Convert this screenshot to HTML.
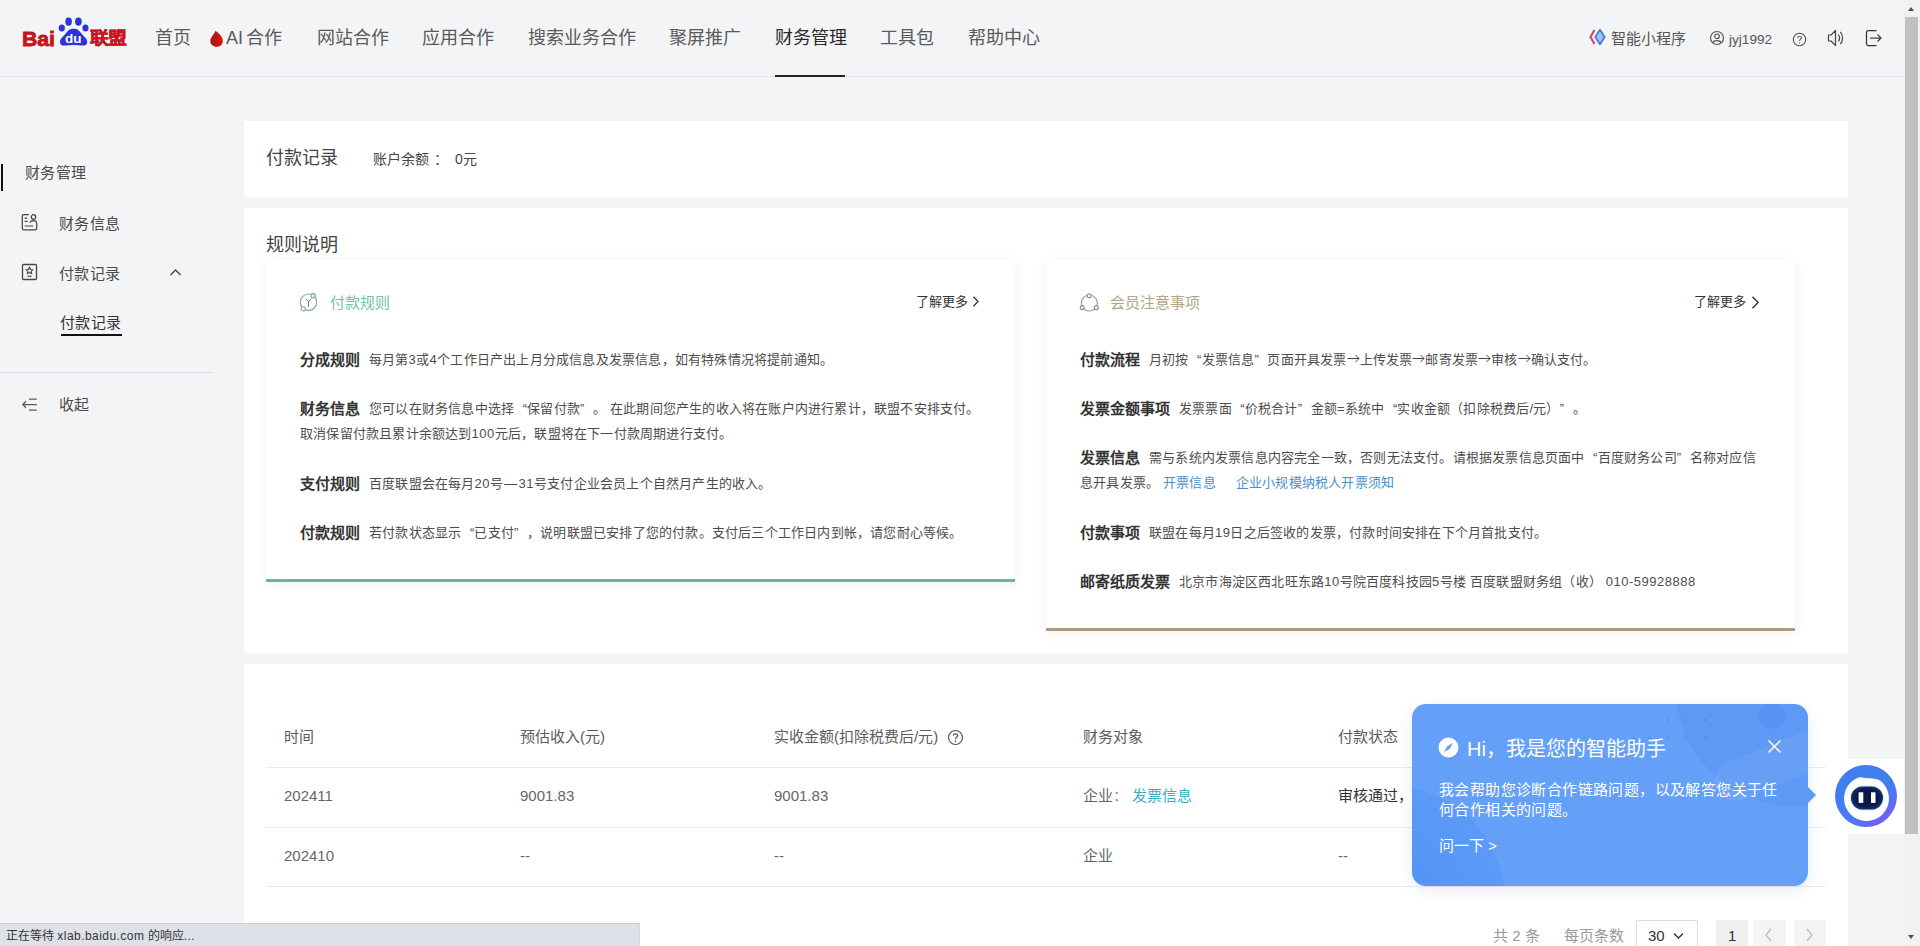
<!DOCTYPE html>
<html lang="zh-CN"><head><meta charset="utf-8">
<style>
*{margin:0;padding:0;box-sizing:border-box}
html,body{width:1920px;height:946px;overflow:hidden;background:#f3f4f6;font-family:"Liberation Sans",sans-serif;color:#333;font-weight:350}
.a{position:absolute;white-space:nowrap}
.nav{position:absolute;top:25px;font-size:18px;color:#5a5a5a;white-space:nowrap;line-height:26px}
.card{position:absolute;background:#fff}
.side{position:absolute;font-size:15px;color:#4a4a4a;line-height:20px;white-space:nowrap;letter-spacing:0.3px}
.ic{position:absolute}
.rl{position:absolute;white-space:nowrap;font-size:13px;color:#4d4d4d;line-height:18px;letter-spacing:0.2px}
.rl b{font-size:15px;color:#333;font-weight:bold;margin-right:9px;letter-spacing:0;position:relative;top:1px}
.th{position:absolute;font-size:15px;color:#5c5c5c;line-height:20px;white-space:nowrap}
.td{position:absolute;font-size:15px;color:#666;line-height:20px;white-space:nowrap}
.q{display:inline-block;width:1em;font-style:normal}.ql{text-align:right}.qr{text-align:left}.ar{display:inline-block;width:1em;font-style:normal;vertical-align:1px}
.dg{letter-spacing:0.5px}
.hr{position:absolute;height:1px;background:#ebebeb}
</style></head><body>

<!-- header -->
<div class="a" style="left:0;top:76px;width:1904px;height:1px;background:#e5e6e9"></div>
<svg class="ic" style="left:20px;top:14px" width="110" height="36" viewBox="0 0 110 36">
  <text x="2" y="31.5" font-family="Liberation Sans" font-weight="bold" font-size="21" fill="#c8141e" stroke="#c8141e" stroke-width="0.9" textLength="33" lengthAdjust="spacingAndGlyphs">Bai</text>
  <ellipse cx="48.6" cy="7.6" rx="3.3" ry="4.2" fill="#2d32dc"/>
  <ellipse cx="58.4" cy="7.6" rx="3.3" ry="4.2" fill="#2d32dc"/>
  <ellipse cx="41.8" cy="14" rx="3.1" ry="3.5" fill="#2d32dc"/>
  <ellipse cx="65.5" cy="14" rx="3.1" ry="3.5" fill="#2d32dc"/>
  <path d="M53.6 14.8 C49.5 14.8 48 16.8 46 19.3 C44 21.8 40 24.3 40 28 C40 31.2 42.5 31.8 45.5 31.5 C48.5 31.2 51 31 53.6 31 C56.2 31 58.7 31.2 61.7 31.5 C64.7 31.8 67.2 31.2 67.2 28 C67.2 24.3 63.2 21.8 61.2 19.3 C59.2 16.8 57.7 14.8 53.6 14.8 Z" fill="#2d32dc"/>
  <text x="45" y="29.2" font-family="Liberation Sans" font-weight="bold" font-size="12" fill="#fff" textLength="16.5" lengthAdjust="spacingAndGlyphs">du</text>
  <text x="70" y="30" font-weight="bold" font-size="17.5" fill="#c8141e" stroke="#c8141e" stroke-width="0.5" textLength="36.5" lengthAdjust="spacingAndGlyphs">联盟</text>
</svg>
<div class="nav" style="left:155px">首页</div>
<svg class="ic" style="left:209px;top:30px" width="16" height="18" viewBox="0 0 16 18">
  <defs><linearGradient id="fg" x1="0" y1="0" x2="1" y2="0"><stop offset="0" stop-color="#9c1a1a"/><stop offset="1" stop-color="#e01010"/></linearGradient></defs>
  <path d="M6.5 0.8 C8.5 2.5 13.5 6 13.8 10.5 C14 14 11.5 16.8 7.8 16.8 C4 16.8 1.3 14.2 1.3 11 C1.3 7.5 4.5 5.5 6.5 0.8 Z" fill="url(#fg)"/>
</svg>
<div class="nav" style="left:226px">AI<span style="margin-left:3px">合作</span></div>
<div class="nav" style="left:317px">网站合作</div>
<div class="nav" style="left:422px">应用合作</div>
<div class="nav" style="left:528px">搜索业务合作</div>
<div class="nav" style="left:669px">聚屏推广</div>
<div class="nav" style="left:775px;color:#2a2a2a">财务管理</div>
<div class="a" style="left:775px;top:75px;width:70px;height:2px;background:#222"></div>
<div class="nav" style="left:880px">工具包</div>
<div class="nav" style="left:968px">帮助中心</div>

<svg class="ic" style="left:1589px;top:29px" width="18" height="16" viewBox="0 0 18 16">
  <path d="M5.5 1 L1.5 8 L5.5 15" fill="none" stroke="#d2486a" stroke-width="2.2"/>
  <path d="M11 1 L15.5 8 L11 15 L6.5 8 Z" fill="none" stroke="#4a7ee8" stroke-width="2.2"/>
  <path d="M11 3.5 L14 8 L11 12.5 L8 8 Z" fill="#9cc1f5"/>
</svg>
<div class="a" style="left:1611px;top:29px;font-size:15px;color:#555;line-height:20px">智能小程序</div>
<svg class="ic" style="left:1709px;top:30px" width="16" height="16" viewBox="0 0 16 16">
  <circle cx="8" cy="8" r="6.5" fill="none" stroke="#555" stroke-width="1.2"/>
  <circle cx="8" cy="6.3" r="2.3" fill="none" stroke="#555" stroke-width="1.2"/>
  <path d="M3.8 12.6 C5 10 11 10 12.2 12.6" fill="none" stroke="#555" stroke-width="1.2"/>
</svg>
<div class="a" style="left:1729px;top:30px;font-size:13.6px;color:#555;line-height:20px">jyj1992</div>
<svg class="ic" style="left:1792px;top:32px" width="15" height="15" viewBox="0 0 15 15">
  <circle cx="7.5" cy="7.5" r="6.2" fill="none" stroke="#555" stroke-width="1.1"/>
  <path d="M5.5 5.8 C5.5 4 9.5 4 9.5 5.8 C9.5 7.2 7.5 7.2 7.5 9" fill="none" stroke="#555" stroke-width="1.1"/>
  <circle cx="7.5" cy="10.9" r="0.7" fill="#555"/>
</svg>
<svg class="ic" style="left:1827px;top:29px" width="18" height="18" viewBox="0 0 18 18">
  <path d="M1.5 6 L4 6 L8.5 1.5 L8.5 16.5 L4 12 L1.5 12 Z" fill="none" stroke="#444" stroke-width="1.2" stroke-linejoin="round"/>
  <path d="M11.3 5.5 C12.8 7.5 12.8 10.5 11.3 12.5" fill="none" stroke="#444" stroke-width="1.2"/>
  <path d="M13.3 2.8 C16.3 6 16.3 12 13.3 15.2" fill="none" stroke="#444" stroke-width="1.2"/>
</svg>
<svg class="ic" style="left:1864px;top:29px" width="20" height="18" viewBox="0 0 20 18">
  <path d="M12.5 1.5 L4 1.5 C3 1.5 2.5 2 2.5 3 L2.5 15 C2.5 16 3 16.5 4 16.5 L12.5 16.5" fill="none" stroke="#333" stroke-width="1.25"/>
  <path d="M6 9 L16.5 9 M13.5 5.5 L17 9 L13.5 12.5" fill="none" stroke="#444" stroke-width="1.25"/>
</svg>

<!-- sidebar -->
<div class="a" style="left:1px;top:164px;width:2px;height:27px;background:#111"></div>
<div class="side" style="left:25px;top:163px">财务管理</div>
<svg class="ic" style="left:21px;top:213px" width="18" height="18" viewBox="0 0 18 18">
  <path d="M7.8 1.5 L2.8 1.5 C1.9 1.5 1.3 2.1 1.3 3 L1.3 15.3 C1.3 16.2 1.9 16.8 2.8 16.8 L14.2 16.8 C15.1 16.8 15.7 16.2 15.7 15.3 L15.7 9.8" fill="none" stroke="#444" stroke-width="1.25"/>
  <circle cx="12.5" cy="3.9" r="2.2" fill="none" stroke="#444" stroke-width="1.2"/>
  <path d="M9 9.8 C9.3 6.8 15.4 6.8 15.7 9.8" fill="none" stroke="#444" stroke-width="1.2"/>
  <path d="M3.6 5.2 L6.2 5.2 M3.6 8.3 L6.6 8.3 M3.6 13 L12.2 13" stroke="#444" stroke-width="1.2"/>
</svg>
<div class="side" style="left:59px;top:214px">财务信息</div>
<svg class="ic" style="left:21px;top:263px" width="17" height="18" viewBox="0 0 17 18">
  <rect x="1.5" y="1.5" width="14" height="15" rx="1" fill="none" stroke="#444" stroke-width="1.3"/>
  <path d="M8.5 4 L9.5 6.5 L12 6.7 L10.1 8.3 L10.8 10.8 L8.5 9.4 L6.2 10.8 L6.9 8.3 L5 6.7 L7.5 6.5 Z" fill="none" stroke="#444" stroke-width="1.1" stroke-linejoin="round"/>
  <path d="M6.5 13.3 L10.5 13.3" stroke="#444" stroke-width="1.2"/>
</svg>
<div class="side" style="left:59px;top:264px">付款记录</div>
<svg class="ic" style="left:169px;top:267px" width="13" height="10" viewBox="0 0 13 10">
  <path d="M1.5 8 L6.5 3 L11.5 8" fill="none" stroke="#444" stroke-width="1.3"/>
</svg>
<div class="side" style="left:60px;top:313px;color:#333">付款记录</div>
<div class="a" style="left:61px;top:334px;width:61px;height:2px;background:#111"></div>
<div class="a" style="left:0;top:372px;width:212px;height:1px;background:#dcdde2"></div>
<svg class="ic" style="left:21px;top:397px" width="17" height="15" viewBox="0 0 17 15">
  <path d="M8 2 L15.8 2 M2 7.5 L15.8 7.5 M8 13 L15.8 13" stroke="#555" stroke-width="1.25"/>
  <path d="M5 4.3 L1.8 7.5 L5 10.7" fill="none" stroke="#555" stroke-width="1.25"/>
</svg>
<div class="side" style="left:59px;top:395px">收起</div>

<!-- card 1 -->
<div class="card" style="left:244px;top:121px;width:1604px;height:76px"></div>
<div class="a" style="left:266px;top:145px;font-size:18px;color:#444;line-height:26px">付款记录</div>
<div class="a" style="left:373px;top:149px;font-size:14px;color:#444;line-height:20px">账户余额<span style="margin-left:5px">：</span></div>
<div class="a" style="left:455px;top:149px;font-size:14px;color:#444;line-height:20px">0元</div>

<!-- card 2 -->
<div class="card" style="left:244px;top:208px;width:1604px;height:445px"></div>
<div class="a" style="left:266px;top:232px;font-size:18px;color:#444;line-height:26px">规则说明</div>

<div class="card" style="left:266px;top:260px;width:749px;height:322px;box-shadow:0 2px 12px rgba(0,0,0,0.06);border-bottom:3px solid #6db39d"></div>
<svg class="ic" style="left:299px;top:292px" width="20" height="21" viewBox="0 0 20 21">
  <circle cx="9.5" cy="10.2" r="8.2" fill="none" stroke="#88ab9e" stroke-width="1.2"/>
  <circle cx="14.2" cy="3.8" r="2.2" fill="#d8fbf2" stroke="#7ea596" stroke-width="1.1"/>
  <circle cx="4.3" cy="16.8" r="2.1" fill="#fff" stroke="#88ab9e" stroke-width="1.1"/>
  <path d="M6.8 6.8 L9.5 10 L12.2 6.8 M9.5 10 L9.5 15" fill="none" stroke="#71877e" stroke-width="1"/>
</svg>
<div class="a" style="left:330px;top:293px;font-size:15px;color:#78bfa8;line-height:20px">付款规则</div>
<div class="a" style="left:916px;top:293px;font-size:13px;color:#333;line-height:18px">了解更多</div>
<svg class="ic" style="left:972px;top:296px" width="8" height="11" viewBox="0 0 8 11"><path d="M1.5 0.8 L6 5.5 L1.5 10.2" fill="none" stroke="#333" stroke-width="1.3"/></svg>

<div class="rl" style="left:300px;top:350px"><b>分成规则</b>每月第<span class="dg">3</span>或<span class="dg">4</span>个工作日产出上月分成信息及发票信息，如有特殊情况将提前通知。</div>
<div class="rl" style="left:300px;top:399px"><b>财务信息</b>您可以在财务信息中选择<i class="q ql">“</i>保留付款<i class="q qr">”</i>。 在此期间您产生的收入将在账户内进行累计，联盟不安排支付。</div>
<div class="rl" style="left:300px;top:425px">取消保留付款且累计余额达到<span class="dg">100</span>元后，联盟将在下一付款周期进行支付。</div>
<div class="rl" style="left:300px;top:474px"><b>支付规则</b>百度联盟会在每月<span class="dg">20</span>号<span style="margin:0 1px">—</span><span class="dg">31</span>号支付企业会员上个自然月产生的收入。</div>
<div class="rl" style="left:300px;top:523px"><b>付款规则</b>若付款状态显示<i class="q ql">“</i>已支付<i class="q qr">”</i>，说明联盟已安排了您的付款。支付后三个工作日内到帐，请您耐心等候。</div>

<div class="card" style="left:1046px;top:260px;width:749px;height:371px;box-shadow:0 2px 12px rgba(0,0,0,0.06);border-bottom:3px solid #ae9a7e"></div>
<svg class="ic" style="left:1079px;top:293px" width="21" height="20" viewBox="0 0 21 20">
  <circle cx="10.3" cy="10" r="8" fill="none" stroke="#9a9a88" stroke-width="1.15"/>
  <circle cx="10.2" cy="2.8" r="2" fill="#fffff6" stroke="#8e8e7c" stroke-width="1.1"/>
  <circle cx="3.2" cy="14.6" r="2" fill="#fff" stroke="#8e8e7c" stroke-width="1.1"/>
  <circle cx="17.3" cy="14.6" r="2" fill="#fffff0" stroke="#8e8e7c" stroke-width="1.1"/>
</svg>
<div class="a" style="left:1110px;top:293px;font-size:15px;color:#b3a488;line-height:20px">会员注意事项</div>
<div class="a" style="left:1694px;top:293px;font-size:13px;color:#333;line-height:18px">了解更多</div>
<svg class="ic" style="left:1751px;top:296px" width="9" height="13" viewBox="0 0 9 13"><path d="M1.5 0.8 L7 6.5 L1.5 12.2" fill="none" stroke="#333" stroke-width="1.4"/></svg>

<div class="rl" style="left:1080px;top:350px"><b>付款流程</b>月初按<i class="q ql">“</i>发票信息<i class="q qr">”</i>页面开具发票<i class="ar"><svg width="13" height="9" viewBox="0 0 13 9"><path d="M0.5 4.5 L12 4.5 M8.5 1 L12 4.5 L8.5 8" fill="none" stroke="#444" stroke-width="1"/></svg></i>上传发票<i class="ar"><svg width="13" height="9" viewBox="0 0 13 9"><path d="M0.5 4.5 L12 4.5 M8.5 1 L12 4.5 L8.5 8" fill="none" stroke="#444" stroke-width="1"/></svg></i>邮寄发票<i class="ar"><svg width="13" height="9" viewBox="0 0 13 9"><path d="M0.5 4.5 L12 4.5 M8.5 1 L12 4.5 L8.5 8" fill="none" stroke="#444" stroke-width="1"/></svg></i>审核<i class="ar"><svg width="13" height="9" viewBox="0 0 13 9"><path d="M0.5 4.5 L12 4.5 M8.5 1 L12 4.5 L8.5 8" fill="none" stroke="#444" stroke-width="1"/></svg></i>确认支付。</div>
<div class="rl" style="left:1080px;top:399px"><b>发票金额事项</b>发票票面<i class="q ql">“</i>价税合计<i class="q qr">”</i>金额=系统中<i class="q ql">“</i>实收金额（扣除税费后/元）<i class="q qr">”</i>。</div>
<div class="rl" style="left:1080px;top:448px"><b>发票信息</b>需与系统内发票信息内容完全一致，否则无法支付。请根据发票信息页面中<i class="q ql">“</i>百度财务公司<i class="q qr">”</i>名称对应信</div>
<div class="rl" style="left:1080px;top:474px">息开具发票。 <span style="color:#4a90c9">开票信息</span><span style="color:#4a90c9;margin-left:20px">企业小规模纳税人开票须知</span></div>
<div class="rl" style="left:1080px;top:523px"><b>付款事项</b>联盟在每月<span class="dg">19</span>日之后签收的发票，付款时间安排在下个月首批支付。</div>
<div class="rl" style="left:1080px;top:572px"><b>邮寄纸质发票</b>北京市海淀区西北旺东路<span class="dg">10</span>号院百度科技园<span class="dg">5</span>号楼 百度联盟财务组（收） <span class="dg">010-59928888</span></div>

<!-- card 3 table -->
<div class="card" style="left:244px;top:664px;width:1604px;height:282px"></div>
<div class="th" style="left:284px;top:727px">时间</div>
<div class="th" style="left:520px;top:727px">预估收入(元)</div>
<div class="th" style="left:774px;top:727px">实收金额(扣除税费后/元)</div>
<svg class="ic" style="left:947px;top:729px" width="17" height="17" viewBox="0 0 17 17">
  <circle cx="8.5" cy="8.5" r="7" fill="none" stroke="#555" stroke-width="1.2"/>
  <path d="M6.3 6.5 C6.3 4.4 10.7 4.4 10.7 6.5 C10.7 8.1 8.5 8.1 8.5 10.2" fill="none" stroke="#555" stroke-width="1.2"/>
  <circle cx="8.5" cy="12.4" r="0.8" fill="#555"/>
</svg>
<div class="th" style="left:1083px;top:727px">财务对象</div>
<div class="th" style="left:1338px;top:727px">付款状态</div>
<div class="hr" style="left:266px;top:767px;width:1560px"></div>
<div class="td" style="left:284px;top:786px">202411</div>
<div class="td" style="left:520px;top:786px">9001.83</div>
<div class="td" style="left:774px;top:786px">9001.83</div>
<div class="td" style="left:1083px;top:786px">企业<span style="color:#999">：</span><span style="color:#3ab0bf;margin-left:4px">发票信息</span></div>
<div class="td" style="left:1338px;top:786px;color:#333">审核通过，</div>
<div class="hr" style="left:266px;top:827px;width:1560px"></div>
<div class="td" style="left:284px;top:846px">202410</div>
<div class="td" style="left:520px;top:846px">--</div>
<div class="td" style="left:774px;top:846px">--</div>
<div class="td" style="left:1083px;top:846px">企业</div>
<div class="td" style="left:1338px;top:846px">--</div>
<div class="hr" style="left:266px;top:886px;width:1560px"></div>

<!-- pagination -->
<div class="a" style="left:1493px;top:926px;font-size:15px;color:#999;line-height:20px">共 2 条</div>
<div class="a" style="left:1564px;top:926px;font-size:15px;color:#999;line-height:20px">每页条数</div>
<div class="a" style="left:1636px;top:920px;width:62px;height:30px;border:1px solid #ddd;background:#fff"></div>
<div class="a" style="left:1648px;top:926px;font-size:15px;color:#333;line-height:20px">30</div>
<svg class="ic" style="left:1673px;top:932px" width="11" height="8" viewBox="0 0 11 8"><path d="M1 1.5 L5.5 6 L10 1.5" fill="none" stroke="#333" stroke-width="1.4"/></svg>
<div class="a" style="left:1716px;top:920px;width:32px;height:30px;background:#f0f0f0"></div>
<div class="a" style="left:1728px;top:926px;font-size:15px;color:#333;line-height:20px">1</div>
<div class="a" style="left:1753px;top:920px;width:33px;height:30px;background:#f4f4f4"></div>
<svg class="ic" style="left:1764px;top:928px" width="9" height="14" viewBox="0 0 9 14"><path d="M7 1 L2 7 L7 13" fill="none" stroke="#bbb" stroke-width="1.3"/></svg>
<div class="a" style="left:1794px;top:920px;width:32px;height:30px;background:#f4f4f4"></div>
<svg class="ic" style="left:1805px;top:928px" width="9" height="14" viewBox="0 0 9 14"><path d="M2 1 L7 7 L2 13" fill="none" stroke="#bbb" stroke-width="1.3"/></svg>

<!-- status bar -->
<div class="a" style="left:0;top:923px;width:640px;height:23px;background:#dfe1e9;border-top:1px solid #cdced4;border-right:1px solid #d6d7dd"></div>
<div class="a" style="left:6px;top:928px;font-size:12px;color:#333;line-height:17px">正在等待 <span style="letter-spacing:0.45px">xlab.baidu.com</span> 的响应<span style="letter-spacing:0.5px">...</span></div>

<!-- chat popup -->
<div class="a" style="left:1412px;top:704px;width:396px;height:182px;border-radius:14px;background:#64a0f8;overflow:hidden;box-shadow:0 4px 14px rgba(60,90,160,0.12)">
  <div class="a" style="left:263px;top:-138px;width:240px;height:240px;border-radius:50%;background:rgba(50,110,225,0.10)"></div>
  <div class="a" style="left:300px;top:40px;width:130px;height:40px;border-radius:20px;transform:rotate(-22deg);background:rgba(255,255,255,0.06)"></div>
  <div class="a" style="left:347px;top:-1px;width:26px;height:26px;border-radius:50%;background:rgba(40,100,220,0.12)"></div>
  <div class="a" style="left:221px;top:15px;width:2px;height:2px;border-radius:1px;background:rgba(40,90,200,0.35)"></div><div class="a" style="left:237px;top:15px;width:2px;height:2px;border-radius:1px;background:rgba(40,90,200,0.35)"></div><div class="a" style="left:255px;top:15px;width:2px;height:2px;border-radius:1px;background:rgba(40,90,200,0.35)"></div><div class="a" style="left:272px;top:15px;width:2px;height:2px;border-radius:1px;background:rgba(40,90,200,0.35)"></div><div class="a" style="left:292px;top:15px;width:2px;height:2px;border-radius:1px;background:rgba(40,90,200,0.35)"></div><div class="a" style="left:221px;top:33px;width:2px;height:2px;border-radius:1px;background:rgba(40,90,200,0.35)"></div><div class="a" style="left:237px;top:33px;width:2px;height:2px;border-radius:1px;background:rgba(40,90,200,0.35)"></div><div class="a" style="left:255px;top:33px;width:2px;height:2px;border-radius:1px;background:rgba(40,90,200,0.35)"></div><div class="a" style="left:272px;top:33px;width:2px;height:2px;border-radius:1px;background:rgba(40,90,200,0.35)"></div><div class="a" style="left:292px;top:33px;width:2px;height:2px;border-radius:1px;background:rgba(40,90,200,0.35)"></div>
  <div class="a" style="left:-137px;top:82px;width:230px;height:230px;border-radius:50%;background:radial-gradient(circle at 40% 60%, rgba(40,115,238,0.35), rgba(40,115,238,0.15) 70%)"></div>
</div>
<div class="a" style="left:1807px;top:786px;width:0;height:0;border-top:9px solid transparent;border-bottom:9px solid transparent;border-left:9px solid #5f9af4"></div>
<svg class="ic" style="left:1438px;top:737px" width="21" height="21" viewBox="0 0 21 21">
  <circle cx="10.5" cy="10.5" r="10" fill="#fff"/>
  <path d="M15 6 L11.8 11.8 L6 15 L9.2 9.2 Z" fill="#5f9bf6"/>
</svg>
<div class="a" style="left:1467px;top:736px;font-size:20px;color:#fff;line-height:26px;font-weight:400">Hi，我是您的智能助手</div>
<svg class="ic" style="left:1767px;top:739px" width="15" height="15" viewBox="0 0 15 15"><path d="M1.5 1.5 L13.5 13.5 M13.5 1.5 L1.5 13.5" stroke="#fff" stroke-width="1.5"/></svg>
<div class="a" style="left:1439px;top:780px;width:345px;white-space:normal;font-size:15px;color:#fff;line-height:20px;letter-spacing:0.4px;font-weight:400">我会帮助您诊断合作链路问题，以及解答您关于任何合作相关的问题。</div>
<div class="a" style="left:1439px;top:836px;font-size:15px;color:#fff;line-height:20px;font-weight:400">问一下 &gt;</div>

<!-- robot -->
<div class="a" style="left:1848px;top:759px;width:56px;height:75px;background:#fff"></div>
<svg class="ic" style="left:1834px;top:764px" width="64" height="64" viewBox="0 0 64 64">
  <defs><linearGradient id="rg" x1="0.2" y1="0.1" x2="0.85" y2="0.95"><stop offset="0" stop-color="#3d80f0"/><stop offset="0.65" stop-color="#4a78f0"/><stop offset="1" stop-color="#8058f0"/></linearGradient>
  <clipPath id="oc"><circle cx="32" cy="32" r="30.5"/></clipPath><radialGradient id="fc" cx="0.5" cy="0.5" r="0.6"><stop offset="0.6" stop-color="#0d1846"/><stop offset="1" stop-color="#1a3a8a"/></radialGradient></defs>
  <circle cx="32" cy="32" r="31" fill="url(#rg)"/>
  <circle cx="32.5" cy="34.5" r="22.5" fill="#fff"/>
  <path d="M23.5 12.5 C31 15 40 13.5 47 16.5 C52 19 54.5 23 56 27 L60 6 L20 6 Z" fill="#3f7ff0" clip-path="url(#oc)"/>
  <rect x="16" y="21.5" width="34" height="25" rx="12.5" fill="#c9f1fb"/>
  <rect x="17" y="22.5" width="32" height="23" rx="11.5" fill="url(#fc)"/>
  <rect x="24.6" y="28.3" width="4.7" height="10.6" fill="#fff"/>
  <rect x="37" y="28.3" width="4.5" height="10.6" fill="#fff"/>
</svg>

<!-- scrollbar -->
<div class="a" style="left:1904px;top:0;width:16px;height:946px;background:#f1f1f1"></div>
<div class="a" style="left:1905px;top:17px;width:13px;height:817px;background:#c1c1c1"></div>
<div class="a" style="left:1908px;top:7px;width:0;height:0;border-left:3.5px solid transparent;border-right:3.5px solid transparent;border-bottom:4px solid #505050"></div>
<div class="a" style="left:1908px;top:935px;width:0;height:0;border-left:3.5px solid transparent;border-right:3.5px solid transparent;border-top:4px solid #505050"></div>

</body></html>
